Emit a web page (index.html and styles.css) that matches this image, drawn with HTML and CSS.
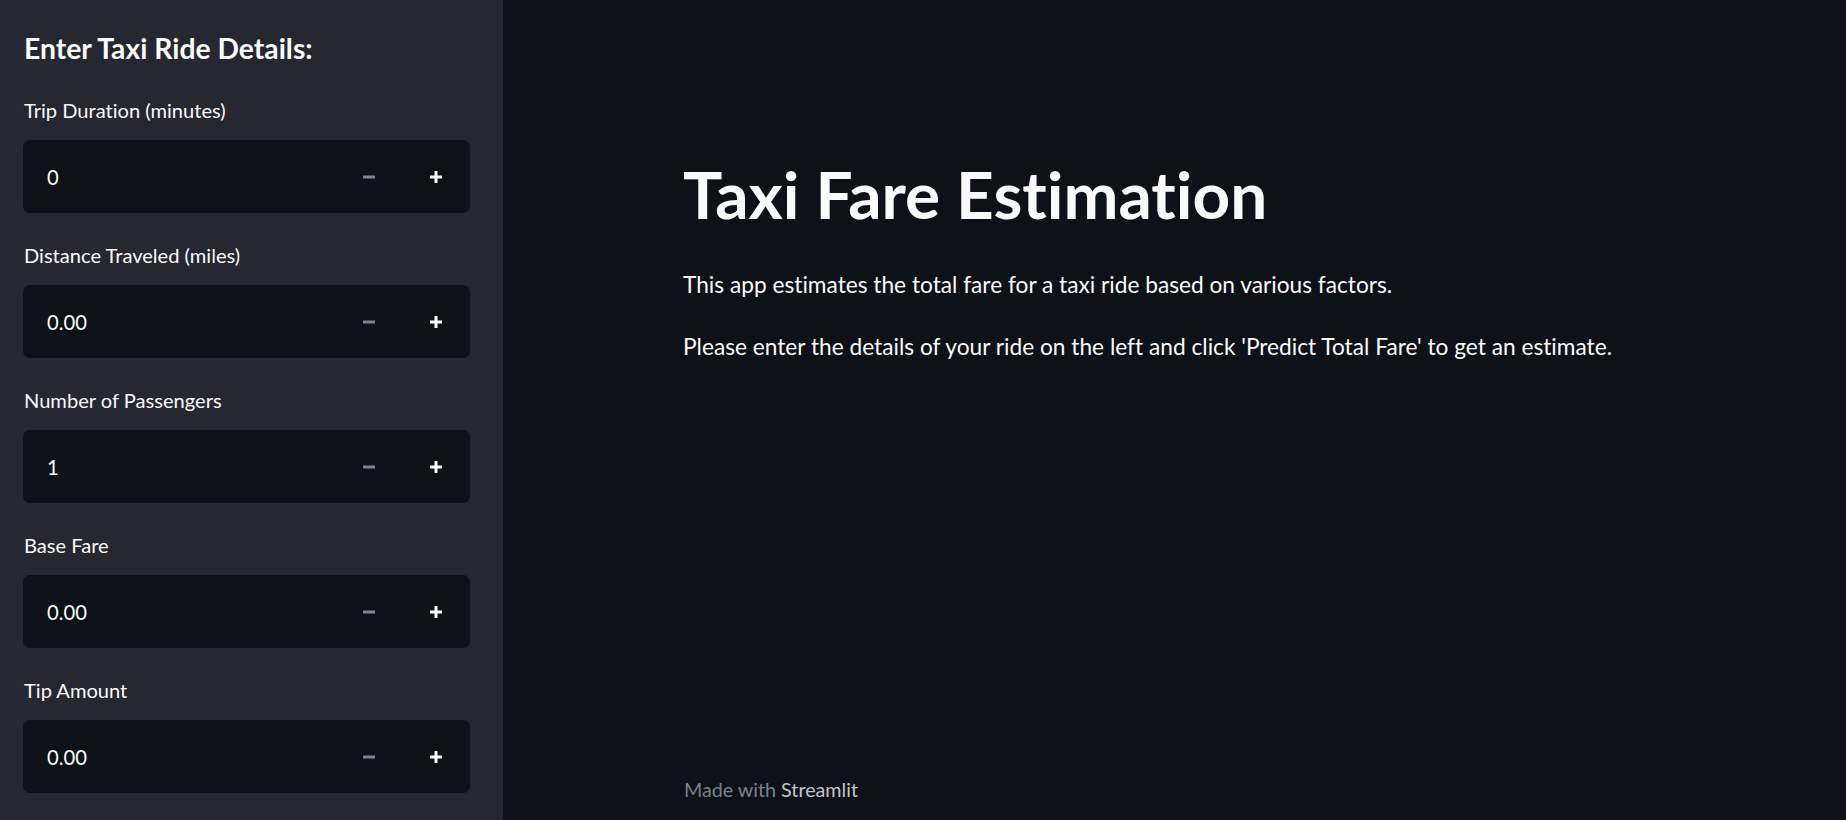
FILE: index.html
```html
<!DOCTYPE html>
<html lang="en">
<head>
<meta charset="utf-8">
<title>Taxi Fare Estimation</title>
<link rel="stylesheet" href="styles.css">
</head>
<body>
<div class="app">
  <aside class="sidebar">
    <h2 class="side-title">Enter Taxi Ride Details:</h2>
    <div class="widget">
      <label class="label">Trip Duration (minutes)</label>
      <div class="num">
        <div class="num-input">0</div>
        <div class="num-btn minus"><svg width="12" height="12" viewBox="0 0 12 12"><rect x="0" y="4.5" width="12" height="3" fill="currentColor"/></svg></div>
        <div class="num-btn plus"><svg width="12" height="12" viewBox="0 0 12 12"><rect x="0" y="4.5" width="12" height="3" fill="currentColor"/><rect x="4.5" y="0" width="3" height="12" fill="currentColor"/></svg></div>
      </div>
    </div>
    <div class="widget">
      <label class="label">Distance Traveled (miles)</label>
      <div class="num">
        <div class="num-input">0.00</div>
        <div class="num-btn minus"><svg width="12" height="12" viewBox="0 0 12 12"><rect x="0" y="4.5" width="12" height="3" fill="currentColor"/></svg></div>
        <div class="num-btn plus"><svg width="12" height="12" viewBox="0 0 12 12"><rect x="0" y="4.5" width="12" height="3" fill="currentColor"/><rect x="4.5" y="0" width="3" height="12" fill="currentColor"/></svg></div>
      </div>
    </div>
    <div class="widget">
      <label class="label">Number of Passengers</label>
      <div class="num">
        <div class="num-input">1</div>
        <div class="num-btn minus"><svg width="12" height="12" viewBox="0 0 12 12"><rect x="0" y="4.5" width="12" height="3" fill="currentColor"/></svg></div>
        <div class="num-btn plus"><svg width="12" height="12" viewBox="0 0 12 12"><rect x="0" y="4.5" width="12" height="3" fill="currentColor"/><rect x="4.5" y="0" width="3" height="12" fill="currentColor"/></svg></div>
      </div>
    </div>
    <div class="widget">
      <label class="label">Base Fare</label>
      <div class="num">
        <div class="num-input">0.00</div>
        <div class="num-btn minus"><svg width="12" height="12" viewBox="0 0 12 12"><rect x="0" y="4.5" width="12" height="3" fill="currentColor"/></svg></div>
        <div class="num-btn plus"><svg width="12" height="12" viewBox="0 0 12 12"><rect x="0" y="4.5" width="12" height="3" fill="currentColor"/><rect x="4.5" y="0" width="3" height="12" fill="currentColor"/></svg></div>
      </div>
    </div>
    <div class="widget">
      <label class="label">Tip Amount</label>
      <div class="num">
        <div class="num-input">0.00</div>
        <div class="num-btn minus"><svg width="12" height="12" viewBox="0 0 12 12"><rect x="0" y="4.5" width="12" height="3" fill="currentColor"/></svg></div>
        <div class="num-btn plus"><svg width="12" height="12" viewBox="0 0 12 12"><rect x="0" y="4.5" width="12" height="3" fill="currentColor"/><rect x="4.5" y="0" width="3" height="12" fill="currentColor"/></svg></div>
      </div>
    </div>
  </aside>
  <main class="main">
    <div class="block">
      <h1 class="title">Taxi Fare Estimation</h1>
      <p class="para first">This app estimates the total fare for a taxi ride based on various factors.</p>
      <p class="para">Please enter the details of your ride on the left and click 'Predict Total Fare' to get an estimate.</p>
    </div>
    <footer class="footer">
      <div class="footer-inner">Made with <span class="brand">Streamlit</span></div>
    </footer>
  </main>
</div>
</body>
</html>
```
FILE: styles.css
```css
* { box-sizing: border-box; }
html, body { margin: 0; padding: 0; height: 100%; }
body {
  font-family: "Lato", "Liberation Sans", sans-serif;
  font-variant-ligatures: none;
  color: #fafafa;
  background: #0e1117;
  overflow: hidden;
}
.app {
  display: flex;
  height: 820px;
}
.sidebar {
  flex: 0 0 503px;
  width: 503px;
  background: #262730;
  padding: 31px 33px 0 23px;
  overflow: hidden;
}
.side-title {
  margin: 0 0 0 1px;
  font-size: 28.3px;
  line-height: 34px;
  font-weight: 700;
}
.widget {
  display: flex;
  flex-direction: column;
}
.side-title + .widget { margin-top: 33px; }
.widget + .widget { margin-top: 30px; }
.label {
  display: block;
  margin-left: 1px;
  font-size: 20.1px;
  line-height: 24px;
  font-weight: 400;
  color: #fafafa;
}
.num {
  margin-top: 18px;
  height: 73px;
  display: flex;
  background: #0e1117;
  border-radius: 7px;
  overflow: hidden;
}
.num-input {
  flex: 1 1 auto;
  display: flex;
  align-items: center;
  padding-left: 24px;
  font-size: 20.2px;
  color: #fafafa;
}
.num-btn {
  flex: 0 0 67.5px;
  display: flex;
  align-items: center;
  justify-content: center;
}
.num-btn svg { display: block; }
.minus { color: #80828f; }
.plus { color: #fafafa; }
.main {
  flex: 1 1 auto;
  display: flex;
  flex-direction: column;
  min-width: 0;
}
.block {
  flex: 1 1 auto;
  width: 983px;
  margin: 0 auto;
  padding-top: 155px;
}
.title {
  margin: 0;
  font-size: 65.7px;
  line-height: 78px;
  font-weight: 700;
}
.para {
  margin: 35px 0 0;
  font-size: 22.7px;
  line-height: 27px;
}
.para.first { margin-top: 38px; }
.footer {
  width: 983px;
  margin: 0 auto;
  padding-bottom: 18px;
}
.footer-inner {
  font-size: 19.7px;
  line-height: 24px;
  color: #7d808b;
  padding-left: 1px;
}
.brand { color: #c3c5cb; }
```
